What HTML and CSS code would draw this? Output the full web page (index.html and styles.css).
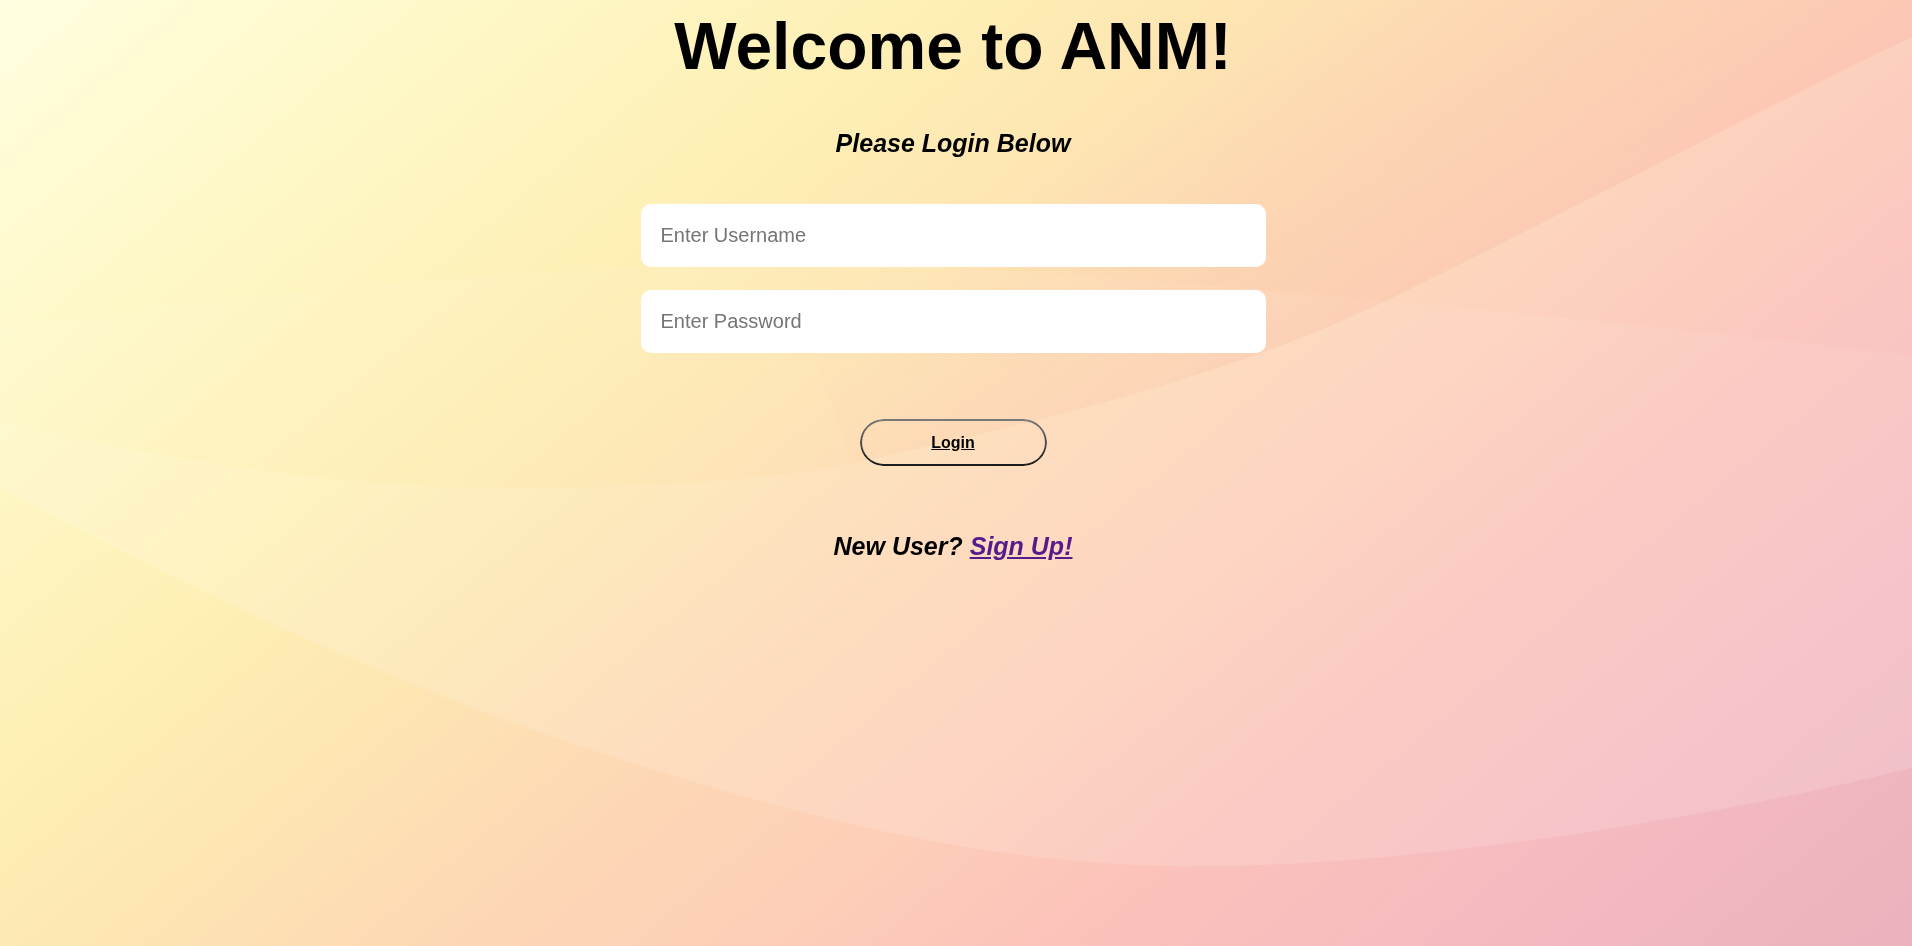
FILE: index.html
```html
<!DOCTYPE html>
<html lang="en">
<head>
<meta charset="utf-8">
<title>ANM Login</title>
<link rel="stylesheet" href="styles.css">
</head>
<body>
<svg class="bg" viewBox="0 0 1912 946" preserveAspectRatio="none" aria-hidden="true">
  <defs>
    <linearGradient id="streak" gradientUnits="userSpaceOnUse" x1="1250" y1="60" x2="1420" y2="330">
      <stop offset="0" stop-color="#f8a8a0" stop-opacity="0"/>
      <stop offset="1" stop-color="#f8a8a0" stop-opacity="0.14"/>
    </linearGradient>
  </defs>
  <path d="M700,0 L1912,0 L1912,37 C1800,90 1600,195 1402,293 C1250,370 1050,420 854,463 C820,380 760,200 700,0 Z" fill="url(#streak)"/>
  <path d="M0,330 C300,280 700,255 950,268 C1200,280 1600,320 1912,355 L1912,768 C1700,820 1400,870 1171,866 C950,862 750,800 610,756 C400,690 150,570 0,488 Z" fill="#ffffff" fill-opacity="0.06"/>
  <path d="M0,421 C200,470 400,492 549,488 C700,485 800,475 854,463 C1050,420 1250,370 1402,293 C1600,195 1800,90 1912,37 L1912,768 C1700,820 1400,870 1171,866 C950,862 750,800 610,756 C400,690 150,570 0,488 Z" fill="#ffffff" fill-opacity="0.09"/>
</svg>
<main class="page">
  <h1 class="title">Welcome to ANM!</h1>
  <h2 class="subtitle">Please Login Below</h2>
  <form class="login-form" onsubmit="return false;">
    <input class="field" type="text" placeholder="Enter Username">
    <input class="field field-gap" type="password" placeholder="Enter Password">
    <button class="login-btn" type="submit">Login</button>
  </form>
  <p class="signup">New User? <a class="signup-link" href="#signup">Sign Up!</a></p>
</main>
</body>
</html>
```

FILE: styles.css
```css
html {
  min-height: 100%;
  background: linear-gradient(140deg, #fffee0 0%, #fef8c8 15%, #fef0b6 30%, #fde6b2 40%, #fdd9b4 50%, #fdcdb8 63%, #fbc2ba 72%, #f5bac0 85%, #ebb2bd 100%);
}

body {
  margin: 0;
  min-height: 946px;
  font-family: "Liberation Sans", Arial, sans-serif;
  color: #000;
}

.bg {
  position: fixed;
  top: 0;
  left: 0;
  width: 100%;
  height: 100%;
  z-index: -1;
}

.page {
  display: flex;
  flex-direction: column;
  align-items: center;
  padding: 8px 6px 0 0;
}

.title {
  margin: 0;
  font-size: 66px;
  font-weight: bold;
  line-height: normal;
}

.subtitle {
  margin: 45px 0 0;
  font-size: 25px;
  font-weight: bold;
  font-style: italic;
  line-height: normal;
}

.login-form {
  display: flex;
  flex-direction: column;
  align-items: center;
  margin-top: 46px;
}

.field {
  box-sizing: border-box;
  width: 625px;
  height: 63px;
  border: none;
  border-radius: 10px;
  background: #fff;
  padding: 0 20px;
  font-family: "Liberation Sans", Arial, sans-serif;
  font-size: 20px;
  color: #000;
  outline: none;
}

.field::placeholder {
  color: #757575;
}

.field-gap {
  margin-top: 23px;
}

.login-btn {
  position: relative;
  box-sizing: border-box;
  width: 187px;
  height: 47px;
  margin-top: 66px;
  border: none;
  border-radius: 24px;
  background: transparent;
  font-family: "Liberation Sans", Arial, sans-serif;
  font-size: 16px;
  font-weight: bold;
  text-decoration: underline;
  color: #000;
  cursor: pointer;
}

.login-btn::before {
  content: "";
  position: absolute;
  inset: 0;
  border-radius: inherit;
  padding: 2px;
  background: linear-gradient(#7a7a7a, #1a1a1a);
  -webkit-mask: linear-gradient(#000 0 0) content-box, linear-gradient(#000 0 0);
  -webkit-mask-composite: xor;
  mask-composite: exclude;
}

.signup {
  margin: 66px 0 0;
  font-size: 25px;
  font-weight: bold;
  font-style: italic;
  line-height: normal;
}

.signup-link {
  color: #551a8b;
}
```
